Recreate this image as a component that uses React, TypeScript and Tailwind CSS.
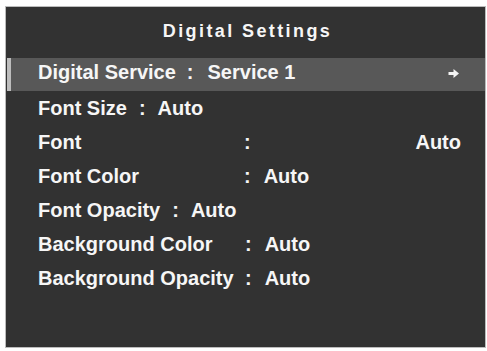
import React from "react";

const font = { fontFamily: '"Liberation Sans", Arial, sans-serif' };

function Arrow() {
  return (
    <svg width="13" height="11" viewBox="0 0 13 11" className="mr-[25px] mt-[3px]">
      <path d="M1.5 4 H6.5 V1 L12 5.5 L6.5 10 V7 H1.5 Z" fill="#f4f4f4" />
    </svg>
  );
}

export default function App() {
  return (
    <div className="w-[487px] h-[351px] bg-white overflow-hidden" style={font}>
      <div className="ml-[5px] mt-[6px] w-[481px] h-[342px] border border-[#bcbcbc] bg-[#323232] flex flex-col text-[#f6f6f6] font-bold">
        <div className="h-[51px] flex items-center justify-center pb-[3px] pl-[4px] text-[18px] tracking-[2.4px]">
          Digital Settings
        </div>
        {/* highlighted row */}
        <div className="h-[33px] ml-[1px] flex bg-[#585858]">
          <div className="w-[4px] bg-[#bdbdbd]" />
          <div className="flex-1 flex items-center justify-between pl-[27px] pb-[5px] text-[20px] leading-none">
            <div className="flex items-center">
              <span>Digital Service</span>
              <span className="ml-[11px]">:</span>
              <span className="ml-[14px]">Service 1</span>
            </div>
            <Arrow />
          </div>
        </div>
        <div className="flex flex-col pl-[32px] text-[20px] leading-none">
          <div className="h-[34px] flex items-center">
            <span>Font Size</span>
            <span className="ml-[12px]">:</span>
            <span className="ml-[12px]">Auto</span>
          </div>
          <div className="h-[34px] flex items-center">
            <span className="w-[206px]">Font</span>
            <span>:</span>
            <span className="ml-auto mr-[24px]">Auto</span>
          </div>
          <div className="h-[34px] flex items-center">
            <span className="w-[206px]">Font Color</span>
            <span>:</span>
            <span className="ml-[13px]">Auto</span>
          </div>
          <div className="h-[34px] flex items-center">
            <span>Font Opacity</span>
            <span className="ml-[12px]">:</span>
            <span className="ml-[12px]">Auto</span>
          </div>
          <div className="h-[34px] flex items-center">
            <span className="w-[207px]">Background Color</span>
            <span>:</span>
            <span className="ml-[13px]">Auto</span>
          </div>
          <div className="h-[34px] flex items-center">
            <span className="w-[207px]">Background Opacity</span>
            <span>:</span>
            <span className="ml-[13px]">Auto</span>
          </div>
        </div>
      </div>
    </div>
  );
}
